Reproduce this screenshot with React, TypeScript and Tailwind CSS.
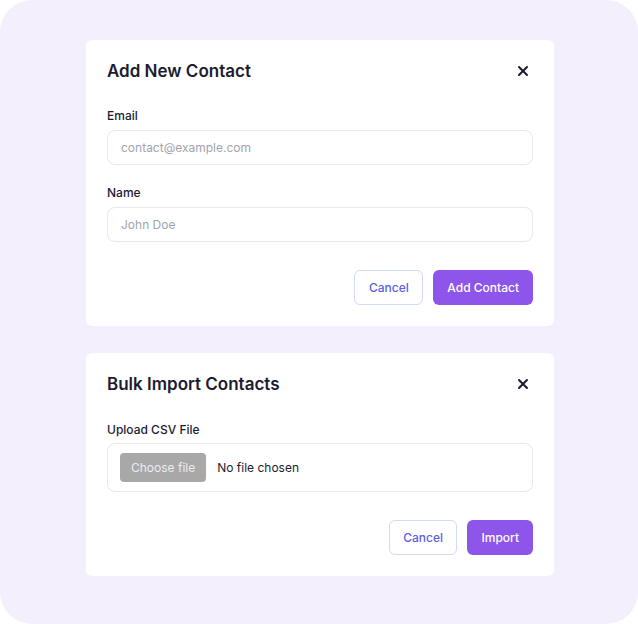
import { X } from "lucide-react";

function CardHeader({ title }: { title: string }) {
  return (
    <div className="flex items-center justify-between h-[19px] pt-[1px]">
      <h2 className="text-[17px] font-semibold leading-[18px] text-[#1c1c30]">{title}</h2>
      <button className="flex items-center justify-center w-5 h-5 text-[#1c1c30]">
        <X size={16} strokeWidth={3} />
      </button>
    </div>
  );
}

function Field({ label, placeholder }: { label: string; placeholder: string }) {
  return (
    <div className="flex flex-col">
      <label className="text-[12px] font-medium leading-5 text-[#1c1c30]">{label}</label>
      <input
        placeholder={placeholder}
        className="mt-1 h-[35px] rounded-lg border border-[#e8e8ee] px-[13px] text-[12px] text-[#1c1c30] placeholder:text-[#a3a3ad] outline-none"
      />
    </div>
  );
}

function Actions({ primary }: { primary: string }) {
  return (
    <div className="flex justify-end gap-[10px]">
      <button className="h-[35px] px-[13.5px] rounded-md border border-[#d4d8fb] bg-white text-[12px] font-medium text-[#5b5fe0]">
        Cancel
      </button>
      <button className="h-[35px] px-[14px] rounded-md bg-[#8d55ea] text-[12px] font-medium text-white">
        {primary}
      </button>
    </div>
  );
}

export default function App() {
  return (
    <div className="w-[638px] h-[624px] bg-white" style={{ fontFamily: "Inter, 'Noto Sans', sans-serif" }}>
      <div className="w-full h-full rounded-[32px] bg-[#f4effd] pt-10 pl-[86px]">
        <div className="w-[468px] flex flex-col gap-[27px]">
          <div className="bg-white rounded-md p-[21px]">
            <CardHeader title="Add New Contact" />
            <div className="mt-[26px] flex flex-col gap-[18px]">
              <Field label="Email" placeholder="contact@example.com" />
              <Field label="Name" placeholder="John Doe" />
            </div>
            <div className="mt-[28px]">
              <Actions primary="Add Contact" />
            </div>
          </div>

          <div className="bg-white rounded-md p-[21px]">
            <CardHeader title="Bulk Import Contacts" />
            <div className="mt-[27px] flex flex-col">
              <label className="text-[12px] font-medium leading-5 text-[#1c1c30]">Upload CSV File</label>
              <div className="mt-[3px] h-[49px] rounded-lg border border-[#e8e8ee] flex items-center px-3">
                <span className="h-[29px] px-[11px] rounded bg-[#a8a8a8] text-[12px] text-[#ececec] flex items-center">
                  Choose file
                </span>
                <span className="ml-[11px] text-[12px] text-[#1c1c30]">No file chosen</span>
              </div>
            </div>
            <div className="mt-[28px]">
              <Actions primary="Import" />
            </div>
          </div>
        </div>
      </div>
    </div>
  );
}
